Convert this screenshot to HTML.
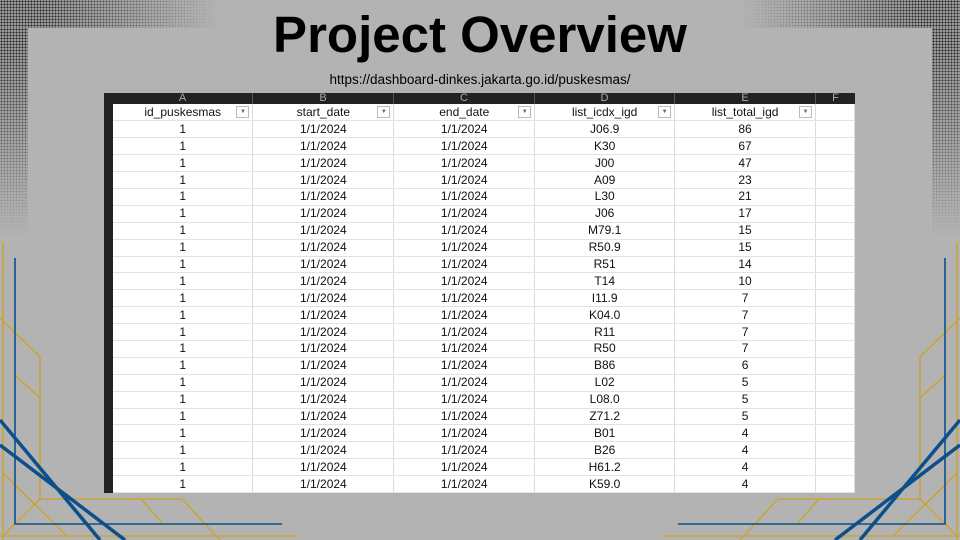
<!DOCTYPE html>
<html><head><meta charset="utf-8"><style>
*{margin:0;padding:0;box-sizing:border-box}
body{width:960px;height:540px;overflow:hidden;background:#b3b3b3;position:relative;font-family:"Liberation Sans",sans-serif}
.dots{position:absolute;background-image:radial-gradient(circle,#111 1px,transparent 1.3px);background-size:3px 3px}
h1{position:absolute;top:5px;left:0;width:960px;text-align:center;font-size:51px;font-weight:bold;color:#000}
.url{position:absolute;top:72px;left:0;width:960px;text-align:center;font-size:13.5px;color:#000}
.sheet{position:absolute;left:104px;top:93px;width:751px;height:400px;background:#fff}
.colhdr{position:absolute;left:0;top:0;height:11px;width:751px;background:#222;display:flex;padding-left:9px}
.colhdr div{color:#aaa;font-size:11px;line-height:11px;text-align:center;border-right:1px solid #555}
.rowhdr{position:absolute;left:0;top:0;width:9px;height:400px;background:#222}
table{position:absolute;left:9px;top:11px;border-collapse:collapse;table-layout:fixed;font-family:"Liberation Sans",sans-serif;font-size:12px;color:#111}
td{height:16.9px;border-right:1px solid #dcdcdc;border-bottom:1px solid #e2e2e2;text-align:center;padding:0;line-height:15px;position:relative}
.f{position:absolute;right:3px;top:2px;width:13px;height:12px;border:1px solid #bbb;background:#fff;font-size:6px;line-height:11px;color:#666}
</style></head><body>
<div class="dots" style="left:0;top:0;width:220px;height:28px;-webkit-mask-image:linear-gradient(90deg,rgba(0,0,0,.9) 20%,transparent)"></div>
<div class="dots" style="left:0;top:28px;width:28px;height:210px;-webkit-mask-image:linear-gradient(180deg,rgba(0,0,0,.9) 10%,transparent)"></div>
<div class="dots" style="right:0;top:0;width:220px;height:28px;-webkit-mask-image:linear-gradient(270deg,rgba(0,0,0,.9) 20%,transparent)"></div>
<div class="dots" style="right:0;top:28px;width:28px;height:210px;-webkit-mask-image:linear-gradient(180deg,rgba(0,0,0,.9) 10%,transparent)"></div>

<h1>Project Overview</h1>
<div class="url">https://dashboard-dinkes.jakarta.go.id/puskesmas/</div>

<svg width="960" height="540" style="position:absolute;left:0;top:0">
<g id="L" fill="none">
<g stroke="#c9a43a" stroke-width="1.6">
<line x1="3" y1="242" x2="3" y2="540"/>
<polyline points="0,318 40,357 40,499 182,499 220,540"/>
<line x1="16" y1="376" x2="40" y2="398"/>
<line x1="141" y1="499" x2="163" y2="524"/>
<line x1="40" y1="499" x2="3" y2="536"/>
<line x1="3" y1="473" x2="67" y2="536"/>
<line x1="0" y1="536" x2="298" y2="536"/>
</g>
<g stroke="#0d4f8a">
<polyline points="15,258 15,524 282,524" stroke-width="1.6"/>
<line x1="0" y1="420" x2="100" y2="540" stroke-width="3.5"/>
<line x1="0" y1="445" x2="125" y2="540" stroke-width="3.5"/>
</g>
</g>
<use href="#L" transform="translate(960,0) scale(-1,1)"/>
</svg>

<div class="sheet">
<div class="rowhdr"></div>
<div class="colhdr"><div style="width:140px">A</div><div style="width:141px">B</div><div style="width:141px">C</div><div style="width:140px">D</div><div style="width:141px">E</div><div style="width:39px;border:0">F</div></div>
<table>
<colgroup><col style="width:140px"><col style="width:141px"><col style="width:141px"><col style="width:140px"><col style="width:141px"><col style="width:39px"></colgroup>
<tr><td>id_puskesmas<span class="f">▼</span></td><td>start_date<span class="f">▼</span></td><td>end_date<span class="f">▼</span></td><td>list_icdx_igd<span class="f">▼</span></td><td>list_total_igd<span class="f">▼</span></td><td></td></tr>
<tr><td>1</td><td>1/1/2024</td><td>1/1/2024</td><td>J06.9</td><td>86</td><td></td></tr>
<tr><td>1</td><td>1/1/2024</td><td>1/1/2024</td><td>K30</td><td>67</td><td></td></tr>
<tr><td>1</td><td>1/1/2024</td><td>1/1/2024</td><td>J00</td><td>47</td><td></td></tr>
<tr><td>1</td><td>1/1/2024</td><td>1/1/2024</td><td>A09</td><td>23</td><td></td></tr>
<tr><td>1</td><td>1/1/2024</td><td>1/1/2024</td><td>L30</td><td>21</td><td></td></tr>
<tr><td>1</td><td>1/1/2024</td><td>1/1/2024</td><td>J06</td><td>17</td><td></td></tr>
<tr><td>1</td><td>1/1/2024</td><td>1/1/2024</td><td>M79.1</td><td>15</td><td></td></tr>
<tr><td>1</td><td>1/1/2024</td><td>1/1/2024</td><td>R50.9</td><td>15</td><td></td></tr>
<tr><td>1</td><td>1/1/2024</td><td>1/1/2024</td><td>R51</td><td>14</td><td></td></tr>
<tr><td>1</td><td>1/1/2024</td><td>1/1/2024</td><td>T14</td><td>10</td><td></td></tr>
<tr><td>1</td><td>1/1/2024</td><td>1/1/2024</td><td>I11.9</td><td>7</td><td></td></tr>
<tr><td>1</td><td>1/1/2024</td><td>1/1/2024</td><td>K04.0</td><td>7</td><td></td></tr>
<tr><td>1</td><td>1/1/2024</td><td>1/1/2024</td><td>R11</td><td>7</td><td></td></tr>
<tr><td>1</td><td>1/1/2024</td><td>1/1/2024</td><td>R50</td><td>7</td><td></td></tr>
<tr><td>1</td><td>1/1/2024</td><td>1/1/2024</td><td>B86</td><td>6</td><td></td></tr>
<tr><td>1</td><td>1/1/2024</td><td>1/1/2024</td><td>L02</td><td>5</td><td></td></tr>
<tr><td>1</td><td>1/1/2024</td><td>1/1/2024</td><td>L08.0</td><td>5</td><td></td></tr>
<tr><td>1</td><td>1/1/2024</td><td>1/1/2024</td><td>Z71.2</td><td>5</td><td></td></tr>
<tr><td>1</td><td>1/1/2024</td><td>1/1/2024</td><td>B01</td><td>4</td><td></td></tr>
<tr><td>1</td><td>1/1/2024</td><td>1/1/2024</td><td>B26</td><td>4</td><td></td></tr>
<tr><td>1</td><td>1/1/2024</td><td>1/1/2024</td><td>H61.2</td><td>4</td><td></td></tr>
<tr><td>1</td><td>1/1/2024</td><td>1/1/2024</td><td>K59.0</td><td>4</td><td></td></tr>
</table>
</div>
</body></html>
